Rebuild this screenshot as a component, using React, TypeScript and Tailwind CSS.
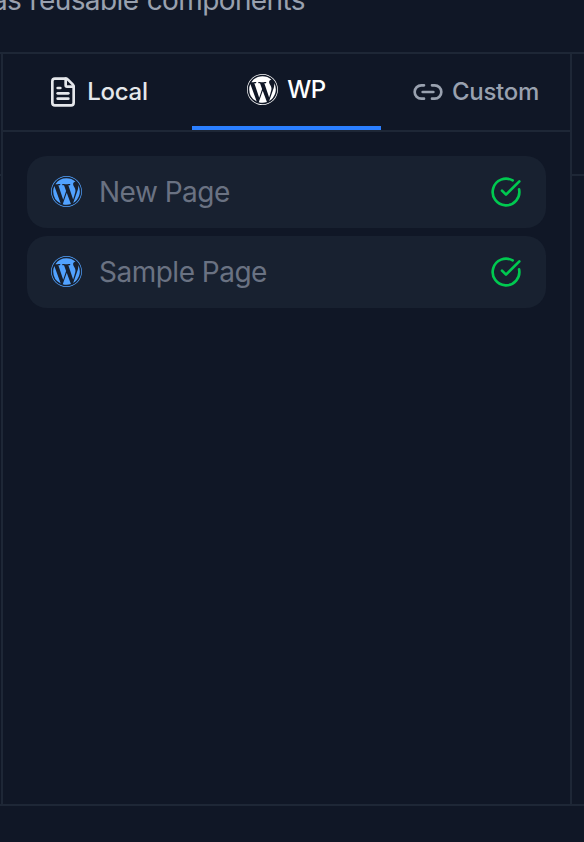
import { CircleCheckBig, FileText, Link2 } from "lucide-react";
import { BsWordpress } from "react-icons/bs";

const pages = ["New Page", "Sample Page"];

export default function App() {
  return (
    <div className="flex h-[842px] w-[584px] flex-col overflow-hidden bg-[#101726] font-['Inter','Liberation_Sans',sans-serif] text-[#99a1af]">
      <header className="flex h-[52px] items-start">
        <p className="-mt-[18px] flex w-[305px] justify-end text-[28px] leading-9 tracking-[-0.6px] whitespace-nowrap [word-spacing:1px]">
          as reusable components
        </p>
      </header>

      <main className="flex h-[754px] border-y-2 border-[#1e2736]">
        <div className="w-px pt-[120px]">
          <div className="h-0.5 bg-[#1e2736]" />
        </div>

        <section className="w-[571px] border-x-2 border-[#1e2736]">
          <nav className="grid h-[78px] grid-cols-3 border-b-2 border-[#1e2736] text-2xl font-medium">
            <button className="flex items-center justify-center gap-2 text-gray-200">
              <FileText size={32} />
              <span className="tracking-[-0.3px]">Local</span>
            </button>
            <button className="flex items-center justify-center gap-[9px] border-b-4 border-[#2b7fff] text-white">
              <BsWordpress size={31} className="-mt-px" />
              <span className="tracking-[-0.4px]">WP</span>
            </button>
            <button className="flex items-center justify-center gap-2">
              <Link2 size={32} />
              <span className="tracking-[-0.3px]">Custom</span>
            </button>
          </nav>

          <ul className="flex flex-col gap-2 p-6">
            {pages.map((page) => (
              <li
                key={page}
                className="flex h-[72px] items-center gap-[17px] rounded-[20px] bg-[#182130] px-6"
              >
                <BsWordpress size={31} className="-mt-px text-[#51a2ff]" />
                <span className="flex-1 text-[28px] tracking-[-0.5px] text-[#6a7282]">
                  {page}
                </span>
                <CircleCheckBig size={32} className="text-[#00c950]" />
              </li>
            ))}
          </ul>
        </section>

        <div className="flex-1 pt-[120px]">
          <div className="h-0.5 bg-[#1e2736]" />
        </div>
      </main>
    </div>
  );
}
